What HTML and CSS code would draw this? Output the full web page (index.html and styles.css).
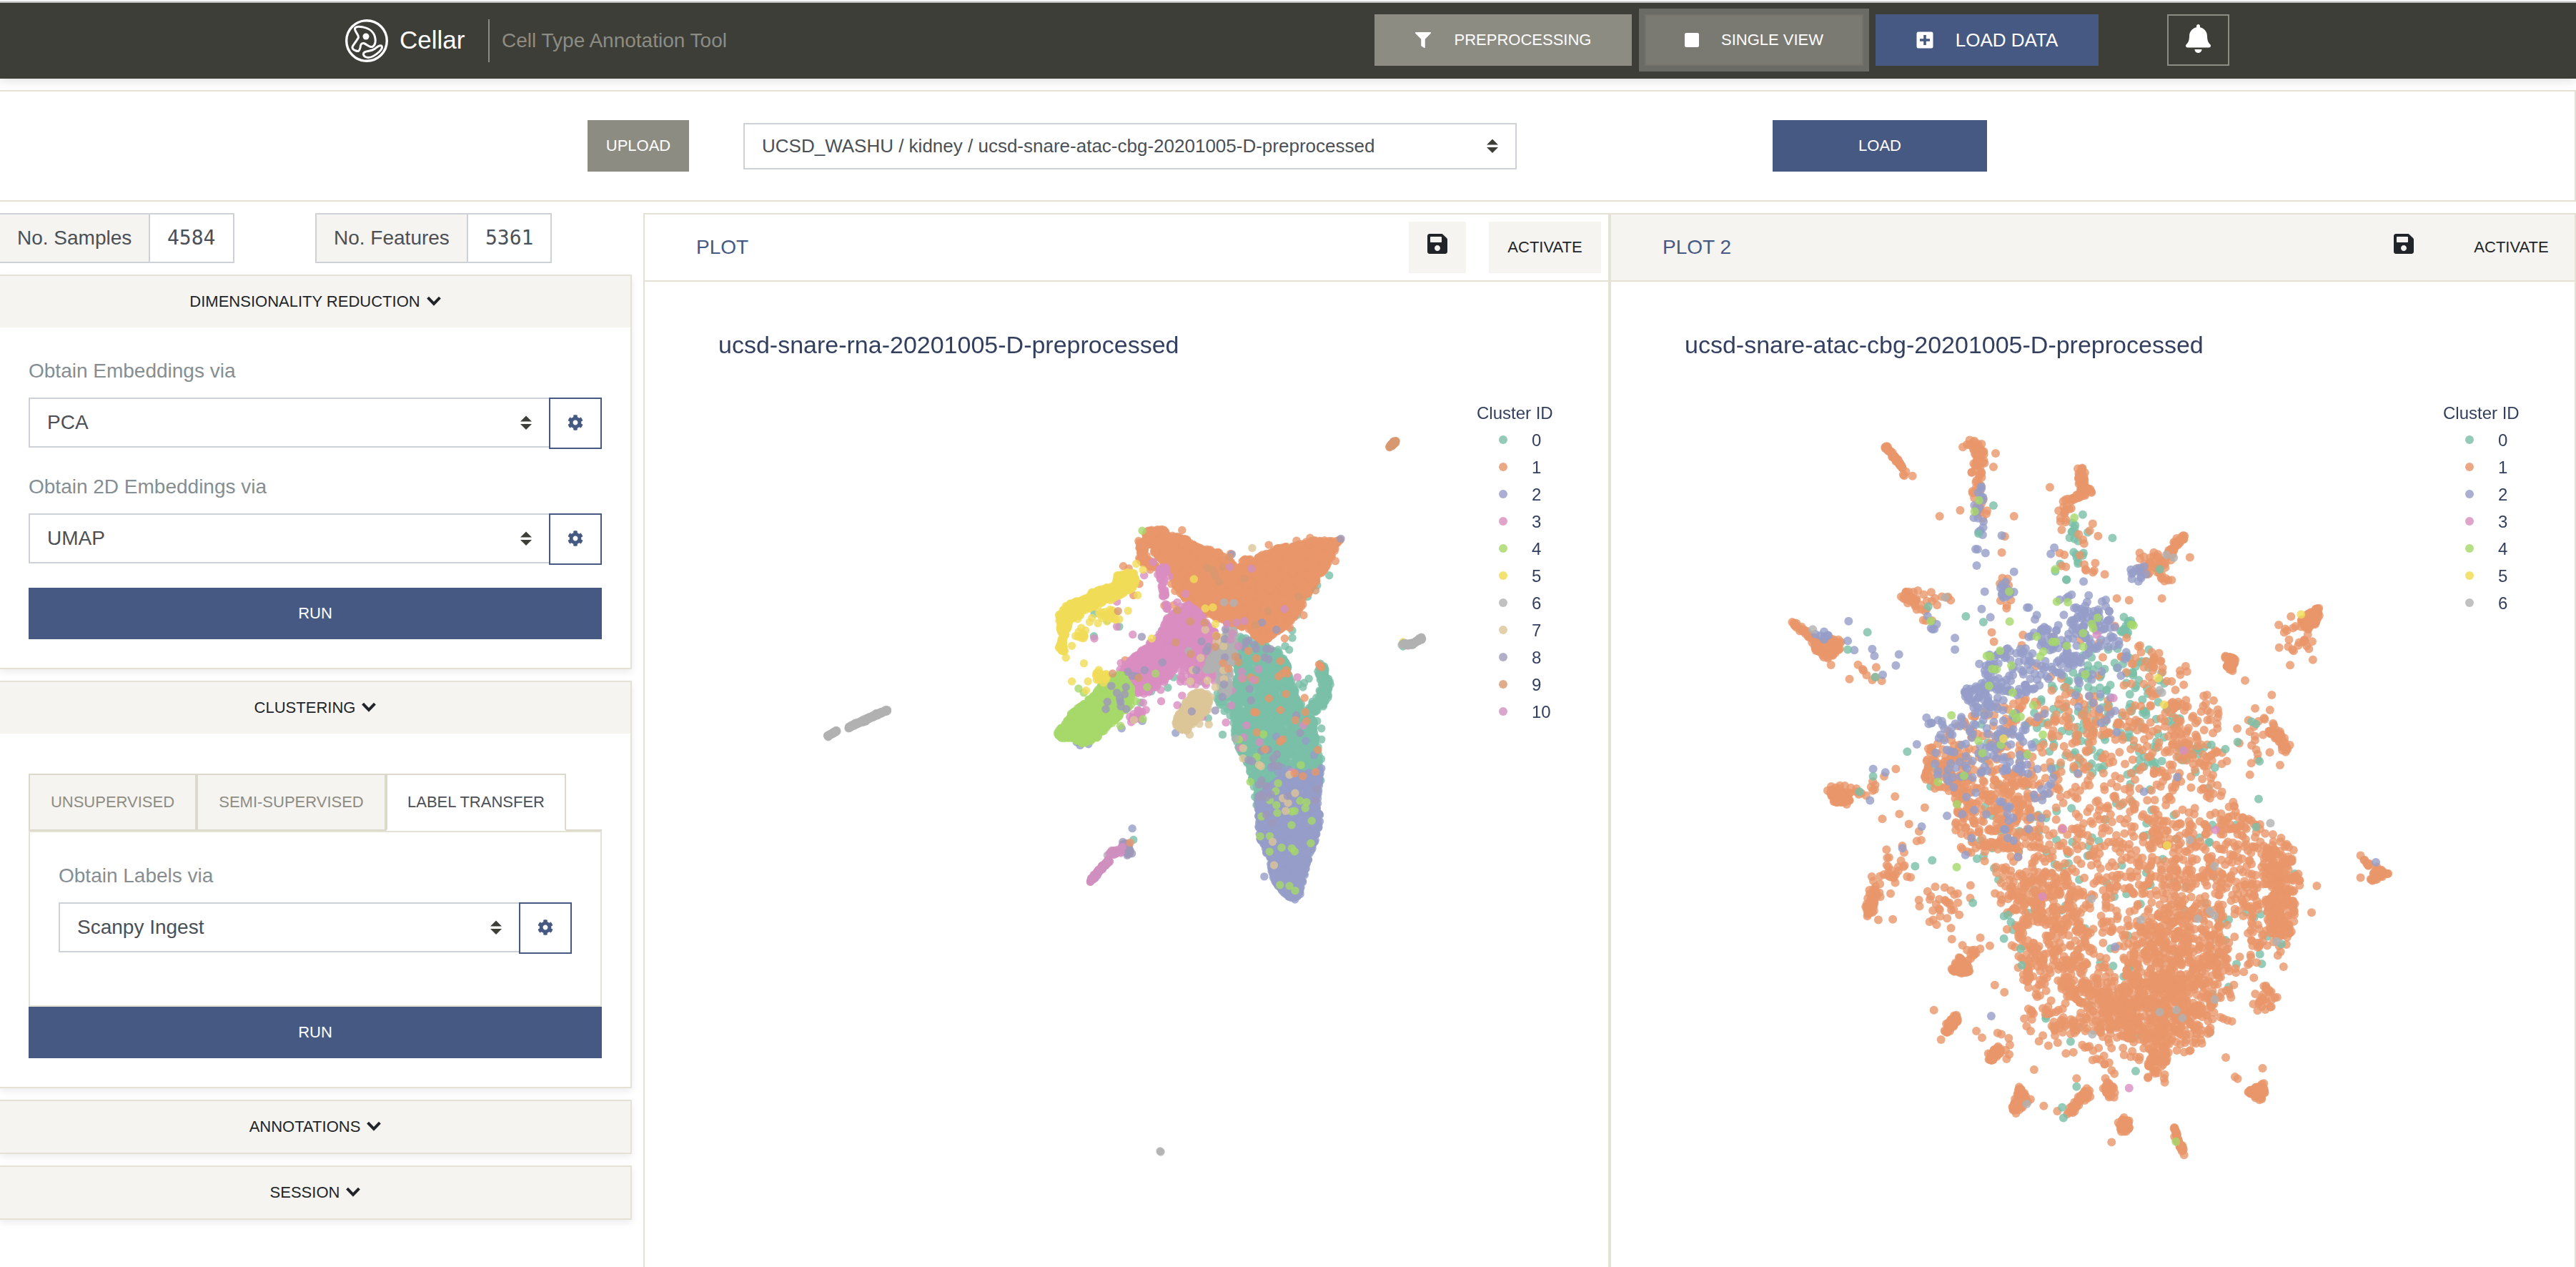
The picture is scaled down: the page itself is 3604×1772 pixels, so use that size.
FILE: index.html
```html
<!DOCTYPE html>
<html lang="en">
<head>
<meta charset="utf-8">
<title>Cellar</title>
<link rel="stylesheet" href="styles.css">
</head>
<body>
<svg class="sprite" aria-hidden="true">
  <symbol id="i-cog" viewBox="0 0 512 512"><path d="M487.4 315.7l-42.6-24.6c4.3-23.2 4.3-47 0-70.2l42.6-24.6c4.9-2.8 7.1-8.6 5.5-14-11.1-35.6-30-67.8-54.7-94.6-3.8-4.1-10-5.1-14.8-2.3L380.8 110c-17.9-15.4-38.5-27.3-60.8-35.1V25.8c0-5.6-3.9-10.5-9.4-11.7-36.7-8.2-74.3-7.8-109.2 0-5.5 1.2-9.4 6.1-9.4 11.7V75c-22.2 7.9-42.8 19.8-60.8 35.1L88.7 85.5c-4.9-2.8-11-1.9-14.8 2.3-24.7 26.7-43.6 58.9-54.7 94.6-1.7 5.4.6 11.2 5.5 14L67.3 221c-4.3 23.2-4.3 47 0 70.2l-42.6 24.6c-4.9 2.8-7.1 8.6-5.5 14 11.1 35.6 30 67.8 54.7 94.6 3.8 4.1 10 5.1 14.8 2.3l42.6-24.6c17.9 15.4 38.5 27.3 60.8 35.1v49.2c0 5.6 3.9 10.5 9.4 11.7 36.7 8.2 74.3 7.8 109.2 0 5.5-1.2 9.4-6.1 9.4-11.7v-49.2c22.2-7.9 42.8-19.8 60.8-35.1l42.6 24.6c4.9 2.8 11 1.9 14.8-2.3 24.7-26.7 43.6-58.9 54.7-94.6 1.5-5.5-.7-11.3-5.6-14.1zM256 336c-44.1 0-80-35.9-80-80s35.9-80 80-80 80 35.9 80 80-35.9 80-80 80z"/></symbol>
  <symbol id="i-save" viewBox="0 0 448 512"><path d="M433.941 129.941l-83.882-83.882A48 48 0 0 0 316.118 32H48C21.49 32 0 53.49 0 80v352c0 26.51 21.49 48 48 48h352c26.51 0 48-21.49 48-48V163.882a48 48 0 0 0-14.059-33.941zM224 416c-35.346 0-64-28.654-64-64 0-35.346 28.654-64 64-64s64 28.654 64 64c0 35.346-28.654 64-64 64zm96-304.52V212c0 6.627-5.373 12-12 12H76c-6.627 0-12-5.373-12-12V108c0-6.627 5.373-12 12-12h228.52c3.183 0 6.235 1.264 8.485 3.515l3.48 3.48A11.996 11.996 0 0 1 320 111.48z"/></symbol>
  <symbol id="i-down" viewBox="0 0 19 13"><path d="M1.500 1.800l8 8.400L17.500 1.800" fill="none" stroke="currentColor" stroke-width="3.800"/></symbol>
  <symbol id="i-sort" viewBox="0 0 16 20"><path d="M0 8.500L8 .5l8 8zM0 12h16l-8 8z"/></symbol>
</svg>

<header class="topbar">
  <svg class="logo" viewBox="0 0 60 60">
    <circle cx="30" cy="30" r="28.300" stroke-width="3.400"/>
    <path stroke-width="3" d="M13.500 12.500C15 10 19 9.800 24 10.800C35 12.500 41 19 42 27C42.700 32 41.500 36.500 38 38.500C34 39.500 31 35.500 26 33.500C22 33 21.500 36 21 39.500C20 44 18.500 45.500 15 44C11 42.500 9 40.500 10.500 37.500C13 33.500 16 30 18.500 25.500C19 21 12.500 17 13.500 12.500Z"/>
    <path stroke-width="3" d="M27 46C30 44 36 45 41 41.500C45 38.500 47 36 50.500 37C53 39 50.500 42.500 47.500 45.500C42 50.500 34 55.500 28 52.500C25 50.500 24.500 48 27 46Z"/>
    <circle class="nucleus" cx="29" cy="24" r="4.500"/>
  </svg>
  <div class="brand">Cellar</div>
  <div class="tagline">Cell Type Annotation Tool</div>
  <nav class="actions">
    <button class="btn btn-grey prep"><svg class="i22" viewBox="0 0 512 512"><path d="M487.976 0H24.028C2.710 0-8.047 25.866 7.058 40.971L192 225.941V432c0 7.831 3.821 15.170 10.237 19.662l80 55.980C298.020 518.690 320 507.493 320 487.980V225.941l184.947-184.970C520.021 25.896 509.338 0 487.976 0z"/></svg>PREPROCESSING</button>
    <button class="btn btn-grey single"><svg class="stop" viewBox="0 0 20 20"><rect width="20" height="20" rx="2.200"/></svg>SINGLE VIEW</button>
    <button class="btn btn-blue data"><svg class="plus" viewBox="0 0 24 24"><path fill-rule="evenodd" d="M3 0.500h18a2.500 2.500 0 0 1 2.500 2.500v18a2.500 2.500 0 0 1-2.500 2.500H3A2.500 2.500 0 0 1 .5 21V3A2.500 2.500 0 0 1 3 .5zM10.200 5v5.200H5v3.600h5.200V19h3.600v-5.200H19v-3.600h-5.200V5z"/></svg>LOAD DATA</button>
    <button class="btn bell"><svg viewBox="0 0 448 512"><path d="M224 512c35.320 0 63.970-28.650 63.970-64H160.030c0 35.350 28.650 64 63.970 64zm215.390-149.710c-19.320-20.760-55.470-51.990-55.470-154.290 0-77.700-54.480-139.900-127.940-155.160V32c0-17.670-14.320-32-31.980-32s-31.980 14.330-31.980 32v20.840C118.560 68.100 64.080 130.300 64.080 208c0 102.300-36.150 133.530-55.470 154.290-6 6.450-8.660 14.160-8.610 21.710.110 16.400 12.980 32 32.100 32h383.800c19.120 0 32-15.600 32.100-32 .050-7.550-2.610-15.270-8.610-21.710z"/></svg></button>
  </nav>
</header>

<section class="loader">
  <button class="btn btn-grey upload">UPLOAD</button>
  <div class="select dataset"><span>UCSD_WASHU / kidney / ucsd-snare-atac-cbg-20201005-D-preprocessed</span><svg class="sort"><use href="#i-sort"/></svg></div>
  <button class="btn btn-blue load">LOAD</button>
</section>

<main class="main">
  <aside class="side">
    <div class="stats">
      <div class="stat first"><span class="k">No. Samples</span><span class="v">4584</span></div>
      <div class="stat"><span class="k">No. Features</span><span class="v">5361</span></div>
    </div>

    <section class="card">
      <h2>DIMENSIONALITY REDUCTION<svg class="down"><use href="#i-down"/></svg></h2>
      <div class="body reduce">
        <label>Obtain Embeddings via</label>
        <div class="group"><div class="select"><span>PCA</span><svg class="sort"><use href="#i-sort"/></svg></div><button class="gear"><svg><use href="#i-cog"/></svg></button></div>
        <label>Obtain 2D Embeddings via</label>
        <div class="group"><div class="select"><span>UMAP</span><svg class="sort"><use href="#i-sort"/></svg></div><button class="gear"><svg><use href="#i-cog"/></svg></button></div>
        <button class="btn btn-blue run">RUN</button>
      </div>
    </section>

    <section class="card">
      <h2>CLUSTERING<svg class="down"><use href="#i-down"/></svg></h2>
      <div class="body cluster">
        <div class="tabs"><div class="tab t1">UNSUPERVISED</div><div class="tab t2">SEMI-SUPERVISED</div><div class="tab t3 active">LABEL TRANSFER</div><div class="rest"></div></div>
        <div class="pane">
          <label>Obtain Labels via</label>
          <div class="group"><div class="select"><span>Scanpy Ingest</span><svg class="sort"><use href="#i-sort"/></svg></div><button class="gear"><svg><use href="#i-cog"/></svg></button></div>
        </div>
        <button class="btn btn-blue run">RUN</button>
      </div>
    </section>

    <section class="card"><h2>ANNOTATIONS<svg class="down"><use href="#i-down"/></svg></h2></section>
    <section class="card"><h2>SESSION<svg class="down"><use href="#i-down"/></svg></h2></section>
  </aside>

  <section class="plot">
    <div class="plot-head"><h3>PLOT</h3><button class="tool save"><svg><use href="#i-save"/></svg></button><button class="tool act">ACTIVATE</button></div>
    <div class="chart">
      <canvas id="rna" width="1348" height="1378"></canvas>
      <div class="chart-title">ucsd-snare-rna-20201005-D-preprocessed</div>
      <div class="legend">
        <div class="lt">Cluster ID</div>
        <div class="li c0">0</div><div class="li c1">1</div><div class="li c2">2</div><div class="li c3">3</div><div class="li c4">4</div><div class="li c5">5</div><div class="li c6">6</div><div class="li c7">7</div><div class="li c8">8</div><div class="li c9">9</div><div class="li c10">10</div>
      </div>
    </div>
  </section>

  <section class="plot second">
    <div class="plot-head"><h3>PLOT 2</h3><button class="tool save"><svg><use href="#i-save"/></svg></button><button class="tool act">ACTIVATE</button></div>
    <div class="chart">
      <canvas id="atac" width="1348" height="1378"></canvas>
      <div class="chart-title">ucsd-snare-atac-cbg-20201005-D-preprocessed</div>
      <div class="legend">
        <div class="lt">Cluster ID</div>
        <div class="li c0">0</div><div class="li c1">1</div><div class="li c2">2</div><div class="li c3">3</div><div class="li c4">4</div><div class="li c5">5</div><div class="li c6">6</div>
      </div>
    </div>
  </section>
</main>
<script src="plots.js"></script>
</body>
</html>
```

FILE: styles.css
```css
* { box-sizing: border-box; margin: 0; padding: 0; }
body { width: 3604px; height: 1772px; overflow: hidden; background: #fff; font-family: "Liberation Sans", Arial, sans-serif; color: #212529; border-top: 2px solid #f4f4f6; }
button { font-family: inherit; border: 0; background: none; color: inherit; }
svg { fill: currentColor; display: block; flex: none; }
.sprite { position: absolute; width: 0; height: 0; }

.topbar { height: 108px; border-top: 2px solid #bdbdbd; background: #3e3e39; display: flex; align-items: center; padding-left: 483px; color: #fff; box-shadow: 0 2px 14px rgba(0,0,0,.14); }
.logo { width: 60px; height: 60px; margin-right: 16px; fill: none; stroke: #fff; stroke-linejoin: round; stroke-linecap: round; }
.nucleus { fill: #fff; stroke: none; }
.brand { width: 126px; height: 60px; line-height: 58px; font-size: 35px; border-right: 2px solid #8d8c83; }
.tagline { width: 1241px; padding-left: 17px; font-size: 28px; color: #8d8c83; }
.actions { display: flex; align-items: center; height: 72px; margin-bottom: 2px; }
.btn { height: 72px; font-size: 22px; color: #fff; display: flex; align-items: center; justify-content: center; }
.btn-grey { background: #8d8c83; }
.btn-blue { background: #465983; }
.prep { width: 360px; margin-left: -3px; }
.i22 { width: 22px; height: 22px; margin-right: 33px; }
.single { width: 306px; margin-left: 18px; background: #7b7a72; border: 2px solid #74736b; box-shadow: 0 0 0 8px #6b6b65; }
.stop { width: 20px; height: 20px; margin-right: 31px; }
.data { width: 312px; margin-left: 17px; font-size: 26px; }
.plus { width: 24px; height: 24px; margin-right: 31px; }
.bell { width: 87px; margin-left: 96px; border: 2px solid #8d8c83; }
.bell svg { width: 35px; height: 40px; margin-bottom: 4px; }

.loader { height: 156px; margin-top: 16px; border: 2px solid #e4e1d5; border-left: 0; padding-left: 822px; display: flex; align-items: center; }
.upload { width: 142px; }
.select { display: flex; align-items: center; justify-content: space-between; border: 2px solid #ced1d6; color: #4b5056; padding: 0 24px 0 24px; }
.sort { width: 16px; height: 20px; color: #3e3e39; }
.dataset { width: 1082px; height: 65px; margin-left: 76px; font-size: 26px; }
.load { width: 300px; margin-left: 358px; }

.main { display: flex; margin-top: 16px; height: 1474px; }
.side { width: 900px; }
.stats { display: flex; height: 70px; margin-bottom: 16px; }
.stat { display: flex; border: 2px solid #ced1d6; font-size: 28px; line-height: 65px; color: #4b5056; width: 331px; margin-left: 113px; }
.stat.first { width: 328px; margin-left: 0; border-left: 0; }
.k { width: 212px; padding-left: 24px; background: #f6f4f1; border-right: 2px solid #ced1d6; }
.first .k { width: 210px; }
.v { padding-left: 24px; font-family: "DejaVu Sans Mono", monospace; font-size: 28px; line-height: 65px; }

.card { width: 884px; border: 2px solid #e4e1d5; border-left: 0; margin-bottom: 16px; box-shadow: 0 4px 10px rgba(0,0,0,.08); background: #fff; }
.card h2 { height: 72px; background: #f6f4f1; font-size: 22px; font-weight: 400; display: flex; align-items: center; justify-content: center; }
.down { width: 20px; height: 14px; margin-left: 9px; margin-bottom: 2px; }
.body { padding: 0 40px; }
label { display: block; font-size: 28px; line-height: 34px; color: #868e92; }
.group { display: flex; align-items: flex-start; }
.group .select { flex: 1; height: 70px; border-right: 0; font-size: 28px; }
.gear { width: 74px; height: 72px; border: 2px solid #465983; color: #465983; display: flex; align-items: center; justify-content: center; }
.gear svg { width: 22px; height: 22px; margin-bottom: 2px; margin-right: 1px; }
.run { width: 100%; }
.reduce { height: 476px; padding-top: 44px; }
.reduce label { margin-bottom: 20px; }
.reduce .group { margin-bottom: 36px; }
.reduce .group:nth-of-type(2) { margin-bottom: 32px; }
.cluster { height: 494px; padding-top: 56px; }
.tabs { display: flex; height: 80px; font-size: 22px; color: #8d8c83; }
.tab { display: flex; align-items: center; justify-content: center; background: #f6f4f1; border: 2px solid #dcd8ca; }
.t1 { width: 235px; }
.t2 { width: 265px; }
.t3 { width: 252px; background: #fff; color: #4b5056; border-bottom-color: #fff; }
.rest { flex: 1; border-bottom: 2px solid #dcd8ca; }
.pane { height: 246px; border: 2px solid #e4e1d5; padding: 44px 40px 0; }
.pane label { margin-bottom: 20px; }

.plot { width: 1352px; border: 2px solid #e4e1d5; border-bottom: 0; }
.plot-head { height: 94px; border-bottom: 2px solid #e4e1d5; display: flex; align-items: center; padding-right: 10px; }
.plot-head h3 { flex: 1; padding-left: 72px; font-size: 28px; font-weight: 400; color: #465983; }
.tool { height: 72px; background: #f6f4f1; display: flex; align-items: center; justify-content: center; font-size: 22px; }
.save { width: 80px; margin-right: 32px; }
.save svg { width: 28px; height: 32px; margin-bottom: 10px; }
.act { width: 157px; }
.second .plot-head { background: #f6f4f1; }
.chart { position: relative; height: 1378px; padding-top: 68px; color: #323f5f; }
.chart canvas { position: absolute; left: 0; top: 0; }
.chart-title { position: relative; padding-left: 103px; font-size: 34px; line-height: 40px; }
.legend { position: relative; margin: 57px 0 0 1164px; width: 150px; font-size: 24px; line-height: 38px; }
.li { display: flex; align-items: center; }
.li::before { content: ""; width: 12px; height: 12px; border-radius: 50%; margin: 0 34px 2px 31px; background: var(--dot); }
.c0 { --dot: #94cbb8; } .c1 { --dot: #eba884; } .c2 { --dot: #a9aed2; } .c3 { --dot: #e0a4cb; }
.c4 { --dot: #b7df86; } .c5 { --dot: #f3e26f; } .c6 { --dot: #c1c1c1; } .c7 { --dot: #e2cfab; }
.c8 { --dot: #b1aec7; } .c9 { --dot: #dfad8c; } .c10 { --dot: #d9a6cc; }
```

FILE: plots.js
```js
// Cluster palette, indexed by cluster id
const C = ['#7bbfa7', '#e8966a', '#959dc8', '#d98dc0', '#a6d86a', '#f1dc57', '#b2b2b2', '#dcc598', '#9d99b9', '#d7986f', '#d090bf'];

function painter(id, ox, oy, sx, sy, r, seed) {
  const ctx = document.getElementById(id).getContext('2d');
  ctx.globalAlpha = 0.8;
  const rnd = () => {
    seed |= 0; seed = seed + 0x6D2B79F5 | 0;
    let t = Math.imul(seed ^ seed >>> 15, 1 | seed);
    t = t + Math.imul(t ^ t >>> 7, 61 | t) ^ t;
    return ((t ^ t >>> 14) >>> 0) / 4294967296;
  };
  const dot = (c, x, y) => {
    ctx.fillStyle = C[c];
    ctx.beginPath();
    ctx.arc(ox + x * sx, oy + y * sy, r, 0, 7);
    ctx.fill();
  };
  const inside = (p, x, y) => {
    let k = false;
    for (let i = 0, j = p.length - 2; i < p.length; j = i, i += 2)
      if ((p[i + 1] > y) !== (p[j + 1] > y) && x < (p[j] - p[i]) * (y - p[i + 1]) / (p[j + 1] - p[i + 1]) + p[i]) k = !k;
    return k;
  };
  return {
    // n points spread evenly over a polygon [x, y, x, y, ...]
    area(c, n, p) {
      const xs = p.filter((_, i) => i % 2 === 0), ys = p.filter((_, i) => i % 2);
      const x0 = Math.min(...xs), x1 = Math.max(...xs), y0 = Math.min(...ys), y1 = Math.max(...ys);
      while (n > 0) {
        const x = x0 + rnd() * (x1 - x0), y = y0 + rnd() * (y1 - y0);
        if (inside(p, x, y)) { dot(c, x, y); n--; }
      }
    },
    // n points scattered along a polyline, w either side
    strip(c, n, w, p) {
      const m = p.length / 2 - 1;
      for (let i = 0; i < n; i++) {
        const t = rnd() * m, k = Math.min(m - 1, Math.floor(t)) * 2, f = t - k / 2;
        const g = (rnd() + rnd() - 1) * w, h = (rnd() + rnd() - 1) * w;
        dot(c, p[k] + (p[k + 2] - p[k]) * f + g, p[k + 1] + (p[k + 3] - p[k + 1]) * f + h);
      }
    },
    dots(c, p) { for (let i = 0; i < p.length; i += 2) dot(c, p[i], p[i + 1]); }
  };
}

// ---- RNA embedding ----
let a = painter('rna', 518, 306, 0.3316, 0.3954, 5.7, 11);
a.area(0, 1700, [940,480, 1100,512, 1155,590, 1190,700, 1262,780, 1285,900, 1285,990, 1180,1040, 1080,1040, 1022,1100, 1005,1010, 980,930, 930,860, 920,760, 930,620]);
a.strip(0, 200, 22, [1285,595, 1315,650, 1300,700, 1255,740]);
a.area(0, 40, [860,640, 930,640, 930,780, 850,720]);
a.dots(0, [1326,265, 1275,300, 1235,340, 1190,405, 1130,430, 1170,460, 1170,486, 1157,528, 1140,515, 1240,630, 1220,645, 1215,660, 1200,650, 876,828, 1293,806, 1293,845, 1292,914, 335,400, 440,446, 333,480, 390,425, 645,662, 575,675, 530,715, 785,640, 800,560, 745,595, 815,770, 1290,990, 1275,780, 1100,450, 710,730, 620,460, 670,625]);
a.area(1, 3100, [545,110, 580,103, 620,98, 655,120, 720,135, 770,165, 860,180, 945,240, 965,205, 1010,205, 1110,165, 1180,160, 1240,142, 1375,138, 1335,200, 1300,255, 1250,310, 1215,370, 1180,415, 1080,488, 1040,500, 980,460, 860,420, 760,385, 715,350, 665,290, 640,230, 590,190]);
a.strip(1, 90, 20, [540,140, 535,200, 590,240]);
a.dots(1, [457,232, 525,295, 500,335, 480,240, 675,320, 690,300, 630,372, 705,105, 1188,142, 1245,132, 1352,214, 1218,406, 1138,488, 1160,450, 1150,445, 910,188, 1071,157, 465,565, 670,370, 660,295]);
a.area(2, 1500, [1110,985, 1290,950, 1275,1100, 1295,1118, 1275,1180, 1255,1240, 1230,1300, 1200,1405, 1180,1412, 1150,1400, 1090,1350, 1075,1270, 1060,1250, 1030,1190, 1022,1050, 1060,1020]);
a.strip(2, 14, 18, [1085,940, 1200,970]);
a.dots(2, [495,1160, 1052,1330, 450,806, 275,866, 310,862, 537,780, 678,822, 260,855, 1293,947, 1262,900, 1227,850, 1103,835]);
a.area(3, 900, [640,415, 720,360, 780,395, 850,470, 845,550, 800,580, 690,580, 640,640, 540,690, 490,680, 440,600, 490,560, 560,510, 620,460]);
a.strip(3, 28, 12, [622,240, 622,310, 645,385]);
a.strip(3, 26, 22, [625,245, 622,255]);
a.strip(3, 70, 60, [690,600, 860,600]);
a.strip(3, 18, 26, [490,780, 565,720]);
a.dots(3, [583,218, 652,268, 545,265, 430,358, 335,488, 430,446, 497,474, 447,575, 617,710, 705,690, 685,724, 615,670, 720,330, 890,785, 977,795, 1032,855, 913,725, 792,765, 1192,625, 965,838, 1217,795, 1168,960, 915,672, 685,360, 950,875]);
a.area(4, 900, [175,825, 240,750, 330,690, 370,645, 450,610, 490,660, 495,720, 420,780, 340,845, 285,862, 240,842, 180,840]);
a.dots(4, [537,107, 593,612, 558,660, 540,773, 268,665, 290,680, 510,710, 445,797, 690,798, 1048,827, 1020,907, 1206,936, 993,995, 1110,1000, 945,845]);
a.dots(4, [1075,1060, 1103,1077, 1107,1105, 1040,1118, 1100,1028, 1203,1062, 1230,1067, 1225,1088, 1168,1100, 1180,1098, 1252,1133, 1167,1148, 1035,1188, 1075,1187, 1248,1212, 1125,1228, 1168,1230, 1180,1241, 1074,1242, 1118,1360, 1158,1363, 1182,1380]);
a.area(5, 480, [430,265, 500,245, 520,300, 400,355, 290,390, 265,420, 200,430, 180,410, 215,368, 300,345, 330,320, 420,300]);
a.area(5, 100, [185,420, 230,430, 205,500, 210,540, 185,525, 195,480]);
a.strip(5, 22, 34, [340,400, 430,410]);
a.strip(5, 12, 30, [270,470, 310,465]);
a.strip(5, 22, 26, [345,610, 375,630]);
a.dots(5, [512,224, 540,245, 518,335, 505,285, 477,390, 350,434, 315,430, 240,514, 215,556, 291,576, 240,640, 308,640, 300,672, 755,278, 803,382, 835,378, 846,437, 850,478, 577,488]);
a.area(6, 150, [805,600, 815,560, 880,500, 895,450, 930,460, 925,570, 850,600]);
a.area(6, 25, [850,600, 910,600, 905,690, 870,680]);
a.dots(6, [882,360, 923,362, 733,532, 930,842, 390,1255, 460,1240]);
a.area(7, 210, [675,805, 680,770, 735,695, 770,672, 830,690, 815,740, 750,790, 720,820]);
a.dots(7, [1001,168, 803,457, 868,485, 850,500, 880,515, 783,557, 750,600, 740,640, 812,637, 845,660, 880,600, 882,632, 818,792, 778,790, 737,828, 502,776, 963,876, 962,912, 1038,940, 1030,935, 1158,970, 1182,1035, 1130,1053, 1152,1070, 1142,1098, 1087,1207, 1093,1290]);
a.dots(8, [1375,135, 915,190, 1042,432, 1103,457, 535,482, 622,573, 547,600, 477,606, 497,620, 515,622, 407,656, 468,660, 430,680, 463,685, 390,712, 383,738, 445,712, 442,700, 470,738, 447,728, 787,498, 815,518, 808,532, 888,456, 885,490, 885,555, 765,600, 746,746, 845,743, 882,650, 875,695, 990,666, 996,707, 968,520, 975,500, 985,495, 1010,510, 1018,525, 1060,525, 1078,525, 1055,555, 1070,562, 940,555, 1187,760, 1203,822, 1040,885, 1068,882, 1105,898, 1090,912, 1000,922, 985,918, 1090,938, 1110,938, 1040,990, 1060,1010, 1030,1005, 1085,1140, 1060,1112, 1275,1020, 1268,1060, 1060,1050, 1040,1040, 1080,1040, 1030,1050, 1150,1045]);
a.strip(8, 50, 16, [460,1215, 475,1230, 480,1250]);
a.dots(9, [878,235, 810,238, 835,245, 845,265, 862,287, 968,278, 1198,340, 1067,390, 1015,440, 905,200, 740,428, 800,432, 685,388, 678,502, 742,543, 522,627, 412,612, 435,391, 1268,318, 845,518, 850,480, 930,552, 943,572]);
a.dots(1, [878,575, 900,595, 985,532, 1018,558, 1120,568, 1145,600, 1150,612, 1128,612, 1112,622, 960,630, 995,625, 1015,635, 1143,684, 1072,700, 1222,698, 1283,580, 1293,590, 1288,585, 1008,748, 1018,750, 1120,741, 1225,748, 1183,777, 1230,780, 1020,820, 1130,845, 1118,853, 1278,882, 1268,960, 1215,975, 1180,965, 1055,880]);
a.dots(10, [907,235, 998,241, 1137,384, 968,426, 935,432, 895,437, 917,470, 910,492, 943,515, 1028,597, 957,605, 1005,635, 958,628]);
a.strip(10, 130, 7, [318,1348, 360,1305, 395,1272]);
a.strip(10, 24, 12, [405,1248, 440,1245]);
a.dots(10, [450,1226, 455,1224, 408,1238]);
a.dots(0, [500,1200]);
a.dots(1, [486,1210]);

// small islands far from the main mass
a = painter('rna', 0, 0, 1, 1, 5.7, 5);
a.strip(9, 60, 2, [1042,231, 1051,223]);
a.dots(0, [1061,510]); a.dots(5, [1061,504]); a.dots(3, [1068,509]);
a.strip(6, 120, 2, [1060,507, 1074,507, 1088,498]);
a.strip(6, 60, 1.500, [255,636, 269,628]);
a.strip(6, 180, 2, [284,624, 339,599]);
a.dots(6, [721,1216, 722,1217]);

// ---- ATAC embedding ----
a = painter('atac', 186, 186, 0.6122, 0.676, 6, 29);
const body = [480,800, 410,760, 400,690, 530,610, 740,560, 900,545, 1000,600, 1050,680, 1070,740, 1150,830, 1250,880, 1275,960, 1255,1090, 1220,1120, 1130,1160, 1110,1240, 1050,1300, 960,1350, 880,1330, 780,1310, 700,1280, 640,1180, 600,1080, 560,960, 490,890];
a.area(0, 170, [720,530, 800,470, 930,480, 990,600, 1050,700, 940,740, 740,760, 640,640]);
a.area(0, 150, body);
a.strip(0, 22, 40, [750,200, 760,270, 715,340]);
a.strip(0, 14, 22, [890,430, 870,440]);
a.strip(1, 50, 4, [323,65, 345,90, 362,110]);
a.dots(1, [366,126, 364,124, 370,118]);
a.strip(1, 50, 15, [522,58, 540,75, 535,100]);
a.strip(1, 46, 17, [538,70, 533,150, 540,210]);
a.area(1, 60, [762,105, 780,110, 778,140, 800,160, 745,180, 765,150]);
a.strip(1, 14, 20, [740,175, 725,230]);
a.strip(1, 20, 55, [725,220, 760,280, 800,330]);
a.strip(1, 36, 10, [970,285, 1005,252]);
a.strip(1, 34, 32, [915,310, 960,310]);
a.strip(1, 14, 24, [950,300, 960,345]);
a.strip(1, 12, 20, [590,335, 605,395]);
a.strip(1, 28, 15, [362,372, 390,385]);
a.strip(1, 12, 20, [350,380, 470,380]);
a.strip(1, 9, 20, [395,390, 420,425]);
a.strip(1, 60, 6, [112,432, 155,462, 190,485]);
a.area(1, 70, [150,460, 225,465, 220,490, 190,508, 165,490]);
a.strip(1, 10, 40, [210,510, 310,525]);
a.area(1, 70, [1320,390, 1315,430, 1290,445, 1270,425]);
a.strip(1, 22, 40, [1240,440, 1285,480]);
a.area(1, 34, [1095,498, 1125,503, 1115,535, 1100,518]);
a.strip(1, 50, 11, [1200,655, 1225,665, 1242,695]);
a.strip(1, 20, 50, [1150,640, 1180,700]);
a.strip(1, 80, 16, [200,780, 235,795]);
a.strip(1, 20, 40, [230,800, 300,770]);
a.strip(1, 44, 15, [283,1030, 290,1010, 300,980]);
a.strip(1, 30, 40, [310,990, 370,910]);
a.area(1, 56, [490,1118, 522,1150, 500,1158, 472,1150]);
a.strip(1, 14, 30, [500,1110, 555,1120]);
a.strip(1, 30, 45, [410,1020, 500,1010]);
a.strip(1, 45, 10, [455,1285, 470,1262, 490,1248]);
a.strip(1, 28, 14, [568,1330, 580,1310]);
a.strip(1, 9, 28, [560,1270, 610,1320]);
a.area(1, 56, [628,1390, 658,1415, 620,1447, 612,1435]);
a.strip(1, 54, 12, [740,1448, 765,1420, 788,1402]);
a.strip(1, 28, 16, [830,1385, 835,1405]);
a.strip(1, 34, 15, [870,1460, 868,1480]);
a.strip(1, 30, 7, [983,1475, 990,1500, 1005,1525]);
a.area(1, 64, [1190,1382, 1190,1405, 1180,1422, 1150,1400]);
a.area(1, 40, [1412,918, 1475,950, 1440,965, 1425,975, 1438,945]);
a.strip(1, 26, 22, [1180,1225, 1205,1185]);
a.strip(1, 36, 70, [1000,600, 1060,640]);
a.strip(1, 30, 70, [900,490, 980,560]);
a.area(1, 18, [560,400, 900,400, 900,540, 560,560]);
a.area(1, 1480, body);
a.area(1, 430, [850,1230, 900,1060, 1000,1000, 1090,1050, 1105,1150, 1055,1290, 960,1320, 860,1280]);
a.area(1, 150, [480,780, 640,730, 690,900, 560,900, 480,860]);
a.area(1, 250, [590,950, 740,940, 800,1100, 780,1200, 640,1170]);
a.area(1, 190, [1180,890, 1250,890, 1270,960, 1250,1080, 1200,1080]);
a.area(1, 170, [880,860, 1180,820, 1180,1060, 980,1020]);
a.area(1, 300, [720,1170, 1000,1150, 1000,1310, 780,1280]);
a.strip(1, 50, 30, [950,1310, 940,1365]);
a.area(1, 60, [410,690, 500,680, 520,780, 420,770]);
a.strip(1, 30, 34, [990,670, 1080,720]);
a.area(1, 50, [640,1180, 760,1250, 880,1380, 760,1330, 640,1290]);
a.dots(1, [447,210, 494,198, 617,210, 699,150, 500,67, 575,80, 570,108, 596,252, 589,285, 852,380, 880,384, 955,380, 1019,295, 997,538, 1145,550, 1058,580, 1206,580, 1202,611, 1222,435, 1223,482, 1248,518, 1300,507, 1297,1030, 1309,975, 1225,725, 1156,745, 347,733, 345,790, 316,836, 355,826, 377,847, 413,813, 400,862, 405,880, 395,882, 307,1045, 340,1044, 473,1062, 475,1085, 440,1055, 540,1082, 434,1232, 531,1275, 663,1355, 685,1430, 840,1505, 1101,1330, 1122,1370, 1128,1374, 1185,1352, 1409,958, 1409,912, 241,547, 385,127, 573,1180, 595,1195, 600,1333, 655,1275, 760,1373, 716,1441, 960,1373, 1115,1255, 1105,1253, 1233,1142, 1165,1165]);
a.area(2, 230, [545,500, 640,465, 740,400, 840,395, 845,470, 740,530, 660,580, 540,610, 490,580]);
a.area(2, 110, [420,640, 540,590, 700,620, 640,730, 440,760]);
a.area(2, 26, [500,560, 560,560, 560,620, 510,600]);
a.area(2, 44, [460,740, 720,690, 700,830, 620,900, 500,850]);
a.area(2, 38, [640,365, 830,370, 880,500, 650,460]);
a.area(2, 24, [740,480, 890,470, 860,640, 740,640]);
a.strip(2, 20, 22, [540,140, 535,190, 545,240, 545,310]);
a.strip(2, 12, 28, [590,350, 605,380]);
a.strip(2, 12, 15, [887,330, 910,320, 900,350]);
a.strip(2, 7, 12, [165,452, 200,458]);
a.strip(2, 5, 14, [415,405, 445,450]);
a.dots(2, [589,250, 617,325, 701,288, 709,275, 776,345, 550,366, 543,402, 563,419, 239,427, 237,468, 252,487, 293,485, 298,499, 354,496, 347,519, 317,538, 482,462, 482,486, 295,733, 323,740, 288,798, 406,852, 362,897, 520,876, 506,911, 626,915, 848,1101, 565,1244, 1444,926, 914,780, 990,750, 852,657, 395,682, 417,627, 464,830, 763,742]);
a.dots(0, [570,188, 536,246, 842,255, 507,417, 282,450, 300,543, 237,486, 421,397, 1100,692, 1128,677, 1170,640, 1160,635, 1178,717, 1068,683, 1076,730, 1176,795, 373,697, 391,934, 430,922, 295,748, 264,780, 523,1010, 895,1358, 727,1433, 730,1455, 1170,853, 950,320, 760,1390, 1228,1095, 632,1105, 635,1139, 603,1035, 610,1050, 594,1084, 547,429]);
a.dots(3, [806,455, 844,586, 1005,695, 729,857, 1077,859, 682,997, 880,1393]);
a.dots(4, [537,177, 527,200, 755,213, 711,320, 606,366, 607,428, 715,387, 740,388, 808,420, 795,433, 798,442, 885,434, 890,436, 775,452, 775,480, 669,459, 705,470, 712,470, 738,478, 684,490, 677,500, 585,488, 555,499, 563,500, 611,519, 567,526, 577,527, 560,561, 614,575, 780,537, 661,601, 474,622, 615,618, 622,628, 632,625, 683,662, 536,675, 587,683, 545,700, 648,703, 503,747, 443,760, 487,806, 486,936, 427,427, 987,1504]);
a.dots(5, [1273,413, 946,545, 960,600, 593,670, 967,891]);
a.dots(6, [965,290, 982,296, 460,378, 157,444, 950,570, 955,575, 1203,845, 1019,880, 1075,934, 794,1002, 907,1045, 1037,1043, 1065,1027, 1075,1036, 1217,1090, 1076,1210, 950,1236, 988,1232, 1002,1248, 796,1282, 646,1426]);
```
